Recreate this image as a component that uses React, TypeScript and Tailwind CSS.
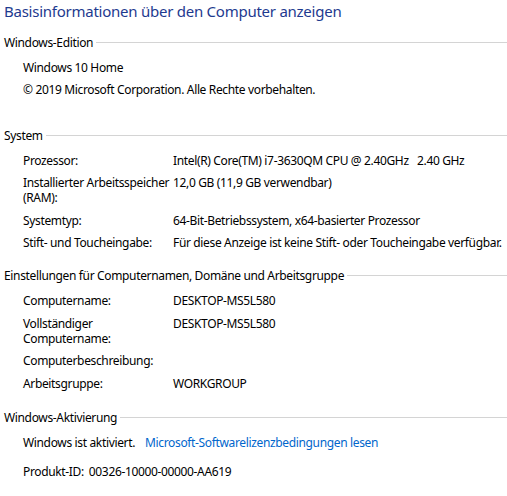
const font = { fontFamily: '"Noto Sans", "Open Sans", sans-serif' };

type Row = { label: string; value?: string };

const systemRows: Row[] = [
  { label: "Prozessor:", value: "Intel(R) Core(TM) i7-3630QM CPU @ 2.40GHz   2.40 GHz" },
  { label: "Installierter Arbeitsspeicher\n(RAM):", value: "12,0 GB (11,9 GB verwendbar)" },
  { label: "Systemtyp:", value: "64-Bit-Betriebssystem, x64-basierter Prozessor" },
  { label: "Stift- und Toucheingabe:", value: "Für diese Anzeige ist keine Stift- oder Toucheingabe verfügbar." },
];

const nameRows: Row[] = [
  { label: "Computername:", value: "DESKTOP-MS5L580" },
  { label: "Vollständiger\nComputername:", value: "DESKTOP-MS5L580" },
  { label: "Computerbeschreibung:" },
  { label: "Arbeitsgruppe:", value: "WORKGROUP" },
];

function SectionHeader({ title }: { title: string }) {
  return (
    <div className="flex items-center pl-[4px] leading-[15px]">
      <span className="whitespace-nowrap">{title}</span>
      <div className="ml-[3px] h-px flex-1 bg-[#d4d4d4]" />
    </div>
  );
}

function InfoRows({ rows }: { rows: Row[] }) {
  return (
    <div className="mt-[10px] flex flex-col gap-[7.5px] pl-[23px]">
      {rows.map((r) => (
        <div key={r.label} className="flex leading-[15px]">
          <div className="w-[150px] shrink-0 whitespace-pre">{r.label}</div>
          <div className="whitespace-pre">{r.value}</div>
        </div>
      ))}
    </div>
  );
}

export default function App() {
  return (
    <div
      className="h-[496px] w-[507px] overflow-hidden bg-white text-[12px] tracking-[-0.35px] text-black"
      style={font}
    >
      <h1 className="pl-[4px] text-[15px] leading-[22px] tracking-[-0.25px] text-[#1e3a8f]">
        Basisinformationen über den Computer anzeigen
      </h1>

      <div className="mt-[12.5px]">
        <SectionHeader title="Windows-Edition" />
        <div className="mt-[10px] flex flex-col gap-[7px] pl-[23px] leading-[15px]">
          <div>Windows 10 Home</div>
          <div>© 2019 Microsoft Corporation. Alle Rechte vorbehalten.</div>
        </div>
      </div>

      <div className="mt-[31px]">
        <SectionHeader title="System" />
        <InfoRows rows={systemRows} />
      </div>

      <div className="mt-[18px]">
        <SectionHeader title="Einstellungen für Computernamen, Domäne und Arbeitsgruppe" />
        <InfoRows rows={nameRows} />
      </div>

      <div className="mt-[19px]">
        <SectionHeader title="Windows-Aktivierung" />
        <div className="mt-[10px] pl-[23px] leading-[15px]">
          <div className="flex gap-[10px]">
            <span>Windows ist aktiviert.</span>
            <a href="#" className="text-[#0066cc]">Microsoft-Softwarelizenzbedingungen lesen</a>
          </div>
          <div className="mt-[14px] flex gap-[5px]">
            <span>Produkt-ID:</span>
            <span>00326-10000-00000-AA619</span>
          </div>
        </div>
      </div>
    </div>
  );
}
